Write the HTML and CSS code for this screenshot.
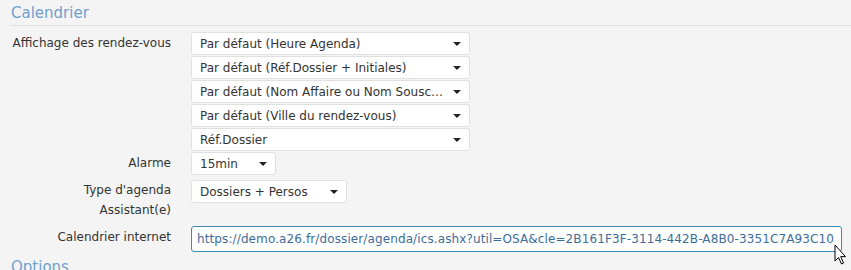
FILE: index.html
```html
<!DOCTYPE html>
<html lang="fr">
<head>
<meta charset="utf-8">
<title>Calendrier</title>
<link rel="stylesheet" href="styles.css">
</head>
<body>
<section class="panel">
  <h2 class="legend">Calendrier</h2>
  <div class="form">
    <div class="row row-stack">
      <div class="label">Affichage des rendez-vous</div>
      <div class="fields">
        <div class="select w-wide"><span class="val">Par défaut (Heure Agenda)</span><span class="caret"></span></div>
        <div class="select w-wide"><span class="val">Par défaut (Réf.Dossier + Initiales)</span><span class="caret"></span></div>
        <div class="select w-wide"><span class="val">Par défaut (Nom Affaire ou Nom Souscripteur)</span><span class="caret"></span></div>
        <div class="select w-wide"><span class="val">Par défaut (Ville du rendez-vous)</span><span class="caret"></span></div>
        <div class="select w-wide"><span class="val">Réf.Dossier</span><span class="caret"></span></div>
      </div>
    </div>
    <div class="row row-alarm">
      <div class="label">Alarme</div>
      <div class="fields">
        <div class="select w-small"><span class="val">15min</span><span class="caret"></span></div>
      </div>
    </div>
    <div class="row row-type">
      <div class="label label-multi">Type d'agenda<br>Assistant(e)</div>
      <div class="fields">
        <div class="select w-mid"><span class="val">Dossiers + Persos</span><span class="caret"></span></div>
      </div>
    </div>
    <div class="row row-url">
      <div class="label">Calendrier internet</div>
      <div class="fields fields-grow">
        <div class="input">https://demo.a26.fr/dossier/agenda/ics.ashx?util=OSA&amp;cle=2B161F3F-3114-442B-A8B0-3351C7A93C10</div>
      </div>
    </div>
  </div>
  <h2 class="legend legend-next">Options</h2>
</section>
<svg class="cursor" width="14" height="22" viewBox="0 0 14 22"><path d="M1 1 L1 17 L4.5 13.5 L7.5 20 L9.5 19 L6.7 12.6 L11.5 12.6 Z" fill="#fff" stroke="#000" stroke-width="1" stroke-linejoin="round"/></svg>
</body>
</html>
```
FILE: styles.css
```css
html, body { margin: 0; padding: 0; }
body {
  background: #f4f4f4;
  font-family: "DejaVu Sans", Verdana, sans-serif;
  font-size: 12px;
  color: #333;
  width: 851px;
  height: 270px;
  overflow: hidden;
  position: relative;
}
.panel { padding: 0 0 0 11px; }
.legend {
  margin: 0;
  font-family: "DejaVu Sans", Verdana, sans-serif;
  font-weight: normal;
  font-size: 15px;
  color: #6fa0cc;
  height: 25px;
  line-height: 26px;
  border-bottom: 1px solid #dedede;
}
.legend-next { margin-top: 2px; border-bottom: none; }
.form { display: flex; flex-direction: column; padding-top: 6px; }
.row { display: flex; gap: 20px; align-items: flex-start; }
.row-stack { margin-bottom: 1px; }
.row-alarm { margin-bottom: 5px; }
.row-type { margin-bottom: 6px; }
.label {
  width: 160px;
  text-align: right;
  line-height: 23px;
  white-space: nowrap;
  flex: none;
}
.label-multi { line-height: 20px; margin-top: 0; }
.fields { display: flex; flex-direction: column; gap: 1px; }
.fields-grow { flex: none; }
.select {
  box-sizing: border-box;
  height: 23px;
  background: #fff;
  border: 1px solid #e0e0e0;
  border-radius: 3px;
  display: flex;
  align-items: center;
  padding: 0 8px 0 8px;
  gap: 6px;
}
.val { flex: 1; white-space: nowrap; overflow: hidden; text-overflow: ellipsis; }
.caret {
  flex: none;
  width: 0; height: 0;
  border-left: 4px solid transparent;
  border-right: 4px solid transparent;
  border-top: 4px solid #222;
  margin-top: 1px;
}
.w-wide { width: 279px; }
.w-small { width: 85px; }
.w-mid { width: 156px; }
.input {
  box-sizing: border-box;
  width: 651px;
  height: 26px;
  border: 1px solid #3b88bb;
  border-radius: 3px;
  background: #fff;
  color: #3d6d99;
  line-height: 24px;
  padding: 0 0 0 5px;
  letter-spacing: 0.11px;
  white-space: nowrap;
  overflow: hidden;
}
.cursor { position: absolute; left: 834px; top: 244px; }
```
